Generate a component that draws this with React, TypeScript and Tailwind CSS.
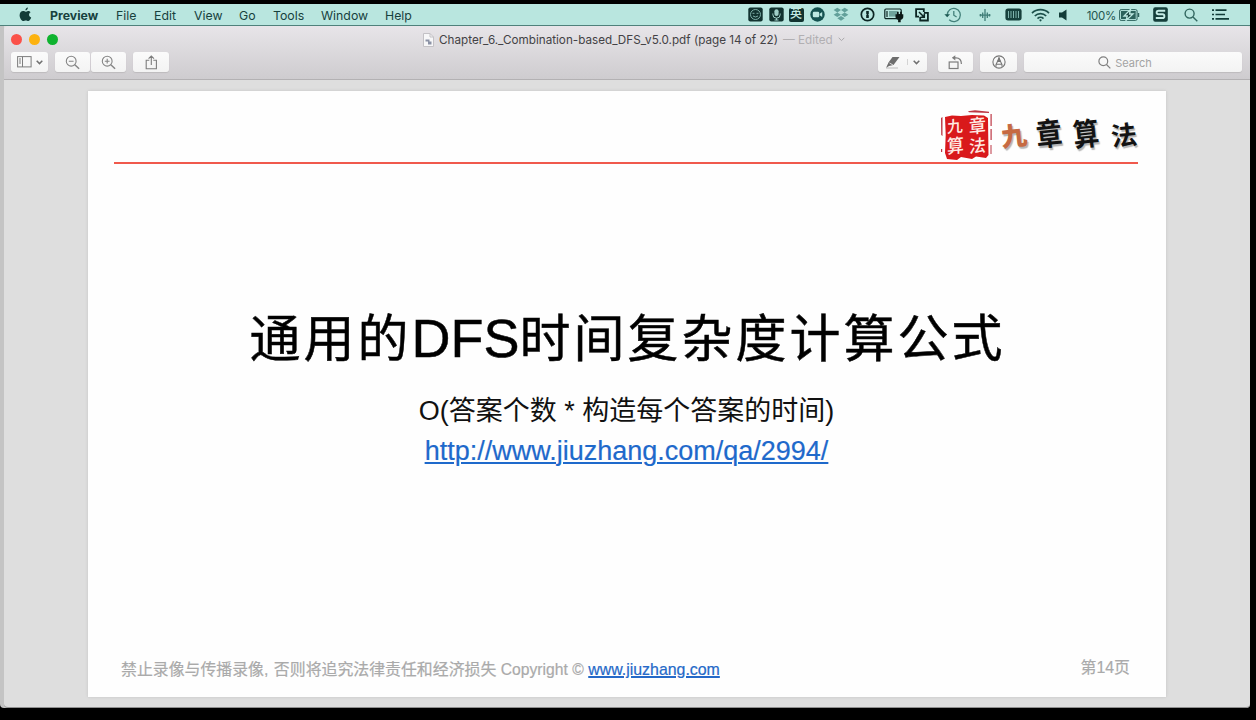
import type { ReactNode } from "react";

const INK = "#123c38";

function Cell({ w, children }: { w: string; children: ReactNode }) {
  return <div className={`${w} flex h-full shrink-0 items-center justify-center`}>{children}</div>;
}

function AppleLogo() {
  return (
    <svg width="13" height="15" viewBox="0 0 13 15" fill={INK}>
      <path d="M8.9 0.4C9 1.8 7.8 3.3 6.4 3.3C6.2 2 7.5 0.6 8.9 0.4ZM9 3.9C10 3.9 11 4.4 11.6 5.2C9.3 6.5 9.7 9.6 12.2 10.5C11.7 12 10.5 14 9.2 14C8.3 14 7.9 13.5 6.8 13.5C5.7 13.5 5.2 14 4.4 14C2.7 14 0.6 10.9 0.6 8.2C0.6 5.6 2.3 4 4.1 4C5.2 4 6 4.7 6.7 4.7C7.3 4.7 8 3.9 9 3.9Z" />
    </svg>
  );
}

function StatusIcons() {
  return (
    <div className="flex h-full items-center">
      <Cell w="w-[21px]">
        <svg width="15" height="15" viewBox="0 0 15 15">
          <rect x="0.3" y="0.5" width="14.4" height="14" rx="2" fill="#123330" />
          <circle cx="7.5" cy="7.5" r="5" fill="none" stroke="#7fb0a9" strokeWidth="1" />
          <path d="M4.5 6.3h2M8.5 6.3h2M5 9q2.500 2 5 0" stroke="#7fb0a9" fill="none" />
        </svg>
      </Cell>
      <Cell w="w-[20px]">
        <svg width="15" height="15" viewBox="0 0 15 15">
          <rect x="0.3" y="0.5" width="14.4" height="14" rx="2" fill="#123330" />
          <rect x="5.4" y="2.2" width="4.2" height="6.8" rx="2.1" fill="#9fcfc8" />
          <path d="M3.8 6.5v1a3.7 3.7 0 0 0 7.4 0v-1M7.5 11.2v2M5.5 13h4" stroke="#9fcfc8" fill="none" />
        </svg>
      </Cell>
      <Cell w="w-[20px]">
        <div className="flex h-[14px] w-[15px] items-center justify-center rounded-[2px] bg-[#123330] text-[12px] leading-none font-medium text-[#c5ebe5]">
          <span className="-mt-px">英</span>
        </div>
      </Cell>
      <Cell w="w-[22px]">
        <svg width="15" height="15" viewBox="0 0 15 15">
          <circle cx="7.5" cy="7.5" r="7.2" fill="#145250" />
          <rect x="2.8" y="4.8" width="6.4" height="5.4" rx="1.2" fill="#bce8e1" />
          <path d="M9.7 6.8l2.5-1.7v4.8l-2.5-1.7z" fill="#bce8e1" />
        </svg>
      </Cell>
      <Cell w="w-[26px]">
        <svg width="16" height="15" viewBox="0 0 16 15" fill="#62a09a">
          <path d="M4.3 0.8L8 3.1L4.3 5.4L0.6 3.1ZM11.7 0.8L15.4 3.1L11.7 5.4L8 3.1ZM4.3 5.5L8 7.8L4.3 10.1L0.6 7.8ZM11.7 5.5L15.4 7.8L11.7 10.1L8 7.8ZM8 9L11.7 11.3L8 13.7L4.3 11.3Z" />
        </svg>
      </Cell>
      <Cell w="w-[26px]">
        <svg width="15" height="15" viewBox="0 0 15 15">
          <circle cx="7.5" cy="7.5" r="6.2" fill="none" stroke="#0c2523" strokeWidth="1.7" />
          <path d="M6.2 4h2.6v3l-.7.6.7.7v2.700H6.2v-3l.7-.6-.7-.7z" fill="#0c2523" />
        </svg>
      </Cell>
      <Cell w="w-[28px]">
        <svg width="20" height="16" viewBox="0 0 20 16">
          <rect x="0.8" y="2" width="16.4" height="9.6" rx="1.2" fill="none" stroke="#0c2523" strokeWidth="1.2" />
          <path d="M3 4v6" stroke="#0c2523" strokeWidth="1.2" />
          <rect x="5" y="4" width="8.5" height="5.6" fill="#6fa39c" />
          <path d="M11.500 7.200h1.500V4.800h1.700V7h1.400V4.800h1.700v2.400h1.500v2.600c0 1.800-1.200 2.800-2.600 3v2.500h-2.600v-2.500c-1.400-.2-2.600-1.200-2.600-3z" fill="#0c1816" />
        </svg>
      </Cell>
      <Cell w="w-[27px]">
        <svg width="14" height="14" viewBox="0 0 14 14" fill="none" stroke="#0c2523" strokeWidth="1.8">
          <path d="M4 8.600H1.100V1.100h7.700V4" />
          <path d="M9 4.800h3.900v7.700H5.200V9" />
          <path d="M4 4l5 5M9.300 5.500v3.800H5.500" strokeWidth="1.500" />
        </svg>
      </Cell>
      <Cell w="w-[36px]">
        <svg width="18" height="16" viewBox="0 0 18 16" fill="none" stroke="#43807a" strokeWidth="1.300">
          <path d="M3.200 8a6.600 6.600 0 1 1 2 4.800" />
          <path d="M9.800 4v4.200l2.800 1.800" />
          <path d="M0.400 7.200h5.600L3.200 10.200z" fill="#1c5953" stroke="none" />
        </svg>
      </Cell>
      <Cell w="w-[27px]">
        <svg width="12" height="14" viewBox="0 0 12 14" stroke="#3f7d77" strokeWidth="1.300">
          <path d="M1.500 6v2.500M3.700 4.500v5.500M6 1v12M8.300 4.500v5.500M10.500 6v2.500M0.500 7.200h11" />
        </svg>
      </Cell>
      <Cell w="w-[30px]">
        <svg width="17" height="13" viewBox="0 0 17 13">
          <rect x="0.400" y="0.600" width="16.200" height="11.800" rx="2.600" fill="#17403c" />
          <path d="M3.500 3v7M6 3v7M8.500 3v7M11 3v7M13.500 3v7" stroke="#7fb3ac" strokeWidth="1" />
        </svg>
      </Cell>
      <Cell w="w-[24px]">
        <svg width="19" height="14" viewBox="0 0 19 14" fill="none" stroke="#1c504b" strokeWidth="1.700">
          <path d="M1 5.200a12 12 0 0 1 17 0M3.800 8a8 8 0 0 1 11.400 0M6.500 10.600a4.300 4.300 0 0 1 6 0" />
          <circle cx="9.500" cy="12.300" r="1.100" fill="#1c504b" stroke="none" />
        </svg>
      </Cell>
      <Cell w="w-[22px]">
        <svg width="8" height="12" viewBox="0 0 8 12" fill={INK}>
          <path d="M0 3.500h3L7.500 0.500v11L3 8.500H0z" />
        </svg>
      </Cell>
      <div className="flex w-[42px] shrink-0 justify-end pt-[2px] text-[11.500px] tracking-[-0.300px] text-[#24554f]">100%</div>
      <Cell w="w-[27px]">
        <svg width="21" height="12" viewBox="0 0 21 12">
          <rect x="0.600" y="0.600" width="17.500" height="10.800" rx="1.500" fill="none" stroke="#2c625c" />
          <rect x="2" y="2" width="14.700" height="8" fill="#2c625c" />
          <path d="M19.500 4v4" stroke="#2c625c" strokeWidth="1.500" />
          <path d="M11.500 0.500L5 7h3.300L7 11.500l7-6.500H10.500z" fill="#173f3b" stroke="#bce8e1" strokeWidth="1.300" />
        </svg>
      </Cell>
      <Cell w="w-[35px]">
        <svg width="15" height="15" viewBox="0 0 15 15">
          <rect x="0.200" y="0.300" width="14.600" height="14.400" rx="2" fill="#153f3b" />
          <path d="M12.200 3.800H5.500C3 3.800 3 7.300 5.500 7.300H9.500C12 7.300 12 11 9.500 11H2.800" fill="none" stroke="#c5ebe5" strokeWidth="1.900" />
        </svg>
      </Cell>
      <Cell w="w-[26px]">
        <svg width="14" height="14" viewBox="0 0 14 14" fill="none" stroke="#31665f" strokeWidth="1.400">
          <circle cx="5.600" cy="5.600" r="4.500" />
          <path d="M9 9l4.300 4.300" />
        </svg>
      </Cell>
      <Cell w="w-[32px]">
        <svg width="17" height="11" viewBox="0 0 17 11" stroke={INK} strokeWidth="1.700">
          <path d="M0 1.200h2M3.500 1.200h11M0 5.500h2M3.500 5.500h9.500M0 9.800h2M3.500 9.800H17" />
        </svg>
      </Cell>
    </div>
  );
}

function MenuBar() {
  return (
    <header className="flex h-[22px] w-[1250px] shrink-0 items-center justify-between border-b border-[#4f817b] bg-[#b9e6df] pl-[19px] pr-[14px] text-[12.300px] leading-[16px] text-[#17413d]">
      <div className="flex items-center">
        <div className="w-[31px]"><AppleLogo /></div>
        <div className="flex pt-[2px]">
          <span className="w-[66px] font-bold">Preview</span>
          <span className="w-[38px]">File</span>
          <span className="w-[40px]">Edit</span>
          <span className="w-[45px]">View</span>
          <span className="w-[34px]">Go</span>
          <span className="w-[48px]">Tools</span>
          <span className="w-[64px]">Window</span>
          <span>Help</span>
        </div>
      </div>
      <StatusIcons />
    </header>
  );
}

function Button({ w, children }: { w: string; children: ReactNode }) {
  return (
    <div className={`${w} flex h-[20px] shrink-0 items-center justify-center rounded-[3px] bg-linear-to-b from-[#fbfbfb] to-[#f3f3f3] shadow-[0_1px_1px_#bdbbbd]`}>
      {children}
    </div>
  );
}

function Chevron() {
  return (
    <svg width="7" height="5" viewBox="0 0 7 5" fill="none" stroke="#707070" strokeWidth="1.500">
      <path d="M0.700 0.800l2.800 2.800L6.300 0.800" />
    </svg>
  );
}

function Magnifier({ sign }: { sign: string }) {
  return (
    <svg width="15" height="15" viewBox="0 0 15 15" fill="none" stroke="#858585" strokeWidth="1.100">
      <circle cx="6.200" cy="6.200" r="4.900" />
      <path d="M9.800 9.800l4.300 4" strokeWidth="1.500" />
      <path d={sign} />
    </svg>
  );
}

function TitleBar() {
  return (
    <div className="flex h-[54px] shrink-0 flex-col rounded-t-[4px] border-b border-[#b3b1b3] bg-linear-to-b from-[#e8e5e9] to-[#cecccf]">
      <div className="flex h-[26px] items-center pl-[7px] pt-px">
        <div className="flex w-[412px] gap-[7px]">
          <span className="h-[11px] w-[11px] rounded-full bg-[#fb5149]" />
          <span className="h-[11px] w-[11px] rounded-full bg-[#fdb20f]" />
          <span className="h-[11px] w-[11px] rounded-full bg-[#0fb32f]" />
        </div>
        <svg width="11" height="14" viewBox="0 0 11 14">
          <path d="M0.500 0.500h6.500l3.500 3.500v9.500h-10z" fill="#f7f7f8" stroke="#c3c1c5" />
          <path d="M7 0.500v3.500h3.500" fill="none" stroke="#c3c1c5" />
          <path d="M2.500 6.500h4v2h2v3H5v-3H2.500z" fill="#8b92a5" />
        </svg>
        <span className="ml-[5px] w-[344px] pt-[2px] text-[11.700px] whitespace-nowrap text-[#434245]">
          Chapter_6._Combination-based_DFS_v5.0.pdf (page 14 of 22)
        </span>
        <span className="w-[55px] pt-[2px] text-[11.700px] whitespace-nowrap text-[#b1afb2]">— Edited</span>
        <svg width="7" height="5" viewBox="0 0 7 5" fill="none" stroke="#aaa8ab"><path d="M0.700 0.800l2.800 2.800L6.300 0.800" /></svg>
      </div>
      <div className="flex pr-[8px] pl-[7px]">
        <Button w="w-[37px]">
          <div className="flex items-center gap-[4px]">
            <svg width="15" height="12" viewBox="0 0 15 12" fill="none" stroke="#7d7d7d">
              <rect x="0.600" y="0.600" width="13.500" height="10.300" />
              <path d="M5.500 0.500v10.500M2 3h2M2 5h2M2 7h2" />
            </svg>
            <Chevron />
          </div>
        </Button>
        <div className="ml-[7px] flex gap-px">
          <Button w="w-[35px]"><Magnifier sign="M3.800 6.200h4.800" /></Button>
          <Button w="w-[35px]"><Magnifier sign="M3.800 6.200h4.800M6.200 3.800v4.800" /></Button>
        </div>
        <div className="ml-[7px]">
          <Button w="w-[36px]">
            <svg width="13" height="15" viewBox="0 0 13 15" fill="none" stroke="#7d7d7d" strokeWidth="1.100">
              <path d="M4.300 5.200H1.200v8.600h10.200V5.200H8.300M6.300 10V1M3.600 3.700L6.300 1L9 3.700" />
            </svg>
          </Button>
        </div>
        <div className="ml-auto flex">
          <Button w="w-[49px]">
            <svg width="16" height="13" viewBox="0 0 16 13">
              <path d="M7.500 1H14.500L8.500 9L4 10L1 12L3.500 6.500z" fill="#6d6d6d" />
              <path d="M4.500 7l3.500 2" stroke="#f4f4f4" strokeWidth="0.800" />
              <path d="M1 12h12" stroke="#bbbbbb" strokeWidth="1.200" />
            </svg>
            <span className="ml-[6px] mr-[5px] h-[6px] w-px bg-[#d4d4d4]" />
            <Chevron />
          </Button>
          <div className="ml-[11px]">
            <Button w="w-[35px]">
              <svg width="15" height="15" viewBox="0 0 15 15" fill="none" stroke="#7d7d7d" strokeWidth="1.200">
                <rect x="1.200" y="7" width="8.800" height="6.500" />
                <path d="M6 2.800h2c3.500 0 5.400 2.500 5.400 6.200" />
                <path d="M7.300 0.200v5.200L3.800 2.800z" fill="#7d7d7d" stroke="none" />
              </svg>
            </Button>
          </div>
          <div className="ml-[7px]">
            <Button w="w-[37px]">
              <svg width="14" height="14" viewBox="0 0 14 14" fill="none" stroke="#777777" strokeWidth="1.100">
                <circle cx="7" cy="7" r="6.100" />
                <path d="M4 11.800V9.500L7 3.200L10 9.500v2.300M4.200 9.300h5.600" />
                <path d="M5.800 6.500L7 3l1.200 3.500z" fill="#777777" />
              </svg>
            </Button>
          </div>
          <div className="ml-[7px]">
            <Button w="w-[218px]">
              <svg className="-ml-[16px]" width="13" height="13" viewBox="0 0 13 13" fill="none" stroke="#808080" strokeWidth="1.200">
                <circle cx="5.300" cy="5.300" r="4.400" />
                <path d="M8.500 8.500l3.800 3.800" />
              </svg>
              <span className="ml-[4px] pt-[2px] text-[11px] leading-none text-[#a3a3a3]">Search</span>
            </Button>
          </div>
        </div>
      </div>
    </div>
  );
}

function Brand() {
  return (
    <div className="flex h-[52px] items-center">
      <div className="relative h-[52px] w-[52px] shrink-0">
        <svg className="absolute inset-0" width="52" height="52" viewBox="0 0 52 52">
          <path d="M5 7L12 5.500L21 6L32 5L44 5.500L48 8L48.500 45L46 48L36 46.500L32 49L21 47L17 50L7 49L5 43L5.700 25z" fill="#d9191b" />
          <path d="M28 1.200L35 0.300L49 1.700V3L29 2.200zM1 8L2.500 7V26L1.200 25zM50.500 4h1.200v12h-1.200zM50.500 19h1.200v11h-1.200zM50.500 35h1v9h-1zM1 39h1.200v3H1z" fill="#bd3744" />
        </svg>
        <div className="absolute top-[8px] left-[7px] grid grid-cols-2 gap-x-[5px] gap-y-[3px] text-[17px] leading-[17px] font-medium text-[#ffe9e2]">
          <span className="-rotate-6 -skew-x-6 text-[16px]">九</span>
          <span className="-rotate-6 -skew-x-6 scale-y-110">章</span>
          <span className="-rotate-6 -skew-x-6 scale-y-110">算</span>
          <span className="-rotate-6 -skew-x-6">法</span>
        </div>
      </div>
      <div className="flex items-center text-[#131313] [text-shadow:1px_2px_1px_#b5b5b5]">
        <span className="ml-[9px] w-[35px] -rotate-6 text-[26px] font-black text-[#c66a42]">九</span>
        <span className="-mt-[3px] w-[37px] scale-y-120 -rotate-6 text-[26px] font-bold">章</span>
        <span className="-mt-[3px] w-[38px] scale-y-120 -rotate-6 text-[26px] font-bold">算</span>
        <span className="w-[27px] -rotate-6 text-[26px] font-bold">法</span>
      </div>
    </div>
  );
}

function Slide() {
  return (
    <main className="flex h-[606px] w-[1078px] flex-col bg-[#fefefe] font-['Liberation_Sans','Noto_Sans_CJK_SC',sans-serif] shadow-[0_0_3px_#c4c4c4]">
      <div className="mr-[28px] ml-[26px] flex h-[73px] shrink-0 items-start justify-end border-b-2 border-[#f0594c] pt-[19px]">
        <Brand />
      </div>
      <div className="flex flex-1 flex-col items-center pt-[135px] pr-px text-black">
        <h1 className="flex h-[78px] items-baseline pl-[2px] text-[51px] leading-[78px] font-normal tracking-[3px] whitespace-nowrap [-webkit-text-stroke:0.500px_#0a0a0a]">
          通用的
          <span className="text-[54px] tracking-normal">DFS</span>
          时间复杂度计算公式
        </h1>
        <p className="mt-[14px] h-[40px] text-[27px] leading-[40px] whitespace-nowrap text-[#111111]">O(答案个数 * 构造每个答案的时间)</p>
        <a className="h-[40px] text-[27px] leading-[40px] whitespace-nowrap text-[#1e69cb] underline decoration-2 underline-offset-[2px] [-webkit-text-stroke:0.200px]">http://www.jiuzhang.com/qa/2994/</a>
      </div>
      <footer className="flex h-[54px] shrink-0 justify-between pt-[13px] pr-[36px] pl-[33px] text-[15.900px] leading-[24px] text-[#aaaaaa] [-webkit-text-stroke:0.200px]">
        <p className="pt-[2px] whitespace-nowrap">
          禁止录像与传播录像, <span className="ml-px">否则将追究法律责任和经济损失</span> <span className="text-[15.700px]">Copyright ©</span>{" "}
          <a className="text-[#2569c8] underline decoration-[1.500px] underline-offset-[1px]">www.jiuzhang.com</a>
        </p>
        <p>第14页</p>
      </footer>
    </main>
  );
}

export default function App() {
  return (
    <div className="flex h-[720px] w-[1256px] flex-col overflow-hidden bg-black pt-[4px] font-['Inter','Noto_Sans_CJK_SC',sans-serif]">
      <MenuBar />
      <div className="h-[682px] w-[1250px] shrink-0 rounded-b-[4px] bg-[#c4c4c4] pl-[4px]">
        <section className="flex h-full flex-col overflow-hidden rounded-b-[4px] border-b border-[#8f8f8f] bg-[#dedede]">
          <TitleBar />
          <div className="flex pt-[11px] pl-[84px]">
            <Slide />
          </div>
        </section>
      </div>
    </div>
  );
}
